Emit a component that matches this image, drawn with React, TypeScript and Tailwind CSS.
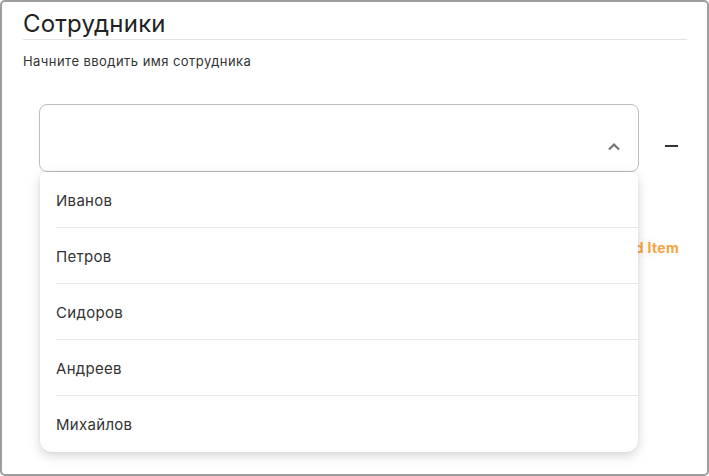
import { useState } from 'react';

const employees = ['Иванов', 'Петров', 'Сидоров', 'Андреев', 'Михайлов'];

export default function App() {
  const [value] = useState('');

  return (
    <div
      className="w-[709px] h-[476px] bg-white border-2 border-[#9e9e9e] rounded-[5px] overflow-hidden"
      style={{ fontFamily: 'Inter, "Noto Sans", sans-serif' }}
    >
      <div className="pl-[21px] pr-[20px] pt-[6px]">
        <h1 className="text-[24px] leading-[31px] font-normal text-[#222] border-b border-[#e3e3e3] tracking-[0.2px]">
          Сотрудники
        </h1>
        <p className="mt-[11px] text-[13px] leading-[20px] text-[#333] tracking-[0.45px]">Начните вводить имя сотрудника</p>

        <div className="mt-[33px] flex items-start">
          <div className="relative ml-[16px] w-[600px]">
            <div className="h-[68px] border border-[#bdbdbd] rounded-[8px] flex items-end justify-end pr-[17px] pb-[20px]">
              <span className="sr-only">{value}</span>
              <svg width="14" height="9" viewBox="0 0 14 9" fill="none">
                <path d="M2 7.5L7 2.5L12 7.5" stroke="#757575" strokeWidth="2.2" />
              </svg>
            </div>

            <ul className="absolute left-[1px] top-[68px] w-[598px] bg-white rounded-t-[6px] rounded-b-[12px] shadow-[0_4px_12px_rgba(0,0,0,0.16),0_0_3px_rgba(0,0,0,0.06)] z-10">
              {employees.map((name, i) => (
                <li key={name} className="h-[56px] pl-[16px]">
                  <div
                    className={`h-full flex items-center pt-[3px] text-[15px] tracking-[0.3px] text-[#333] ${
                      i < employees.length - 1 ? 'border-b border-[#e8e8e8]' : ''
                    }`}
                  >
                    {name}
                  </div>
                </li>
              ))}
            </ul>
          </div>

          <button className="ml-[26px] mt-[41px] w-[13px] h-[2px] bg-[#333]" aria-label="remove" />
        </div>

        <div className="mt-[66px] flex justify-end">
          <button className="px-[8px] text-[14px] leading-[20px] font-bold tracking-[0.3px] text-[#f7a23e] bg-[radial-gradient(circle_at_20%_50%,rgba(255,170,90,0.10),transparent_60%)]">
            Add Item
          </button>
        </div>
      </div>
    </div>
  );
}
